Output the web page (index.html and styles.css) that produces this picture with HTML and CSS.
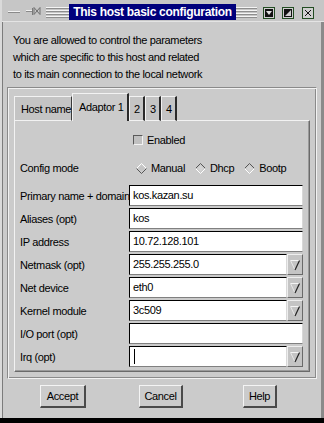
FILE: index.html
```html
<!DOCTYPE html>
<html>
<head>
<meta charset="utf-8">
<link rel="stylesheet" href="styles.css">
</head>
<body>
<div class="window">
  <div class="titlebar">
    <span class="dash"></span>
    <svg class="pin" width="15" height="10" viewBox="0 0 15 10">
      <path d="M0 5.5H6" stroke="#8a8a8a" stroke-width="1"/>
      <path d="M0 4.5H6" stroke="#f0f0f0" stroke-width="1"/>
      <path d="M6.5 2V9" stroke="#7a7a7a" stroke-width="1"/>
      <path d="M8 1.5L14 8.5M8 8.5L14 1.5M8 1.5V8.5M14 1.5V8.5" stroke="#707070" stroke-width="1" fill="none"/>
    </svg>
    <span class="stripes s1"></span>
    <span class="title">This host basic configuration</span>
    <span class="stripes s2"></span>
    <span class="tbtn b1">
      <svg width="12" height="12" viewBox="0 0 12 12"><rect x="0.5" y="0.5" width="11" height="11" fill="#cfcfcf" stroke="#234d23"/><rect x="2" y="2" width="8" height="8" fill="#111"/><path d="M3 4H9L6 8Z" fill="#e0e0e0"/></svg>
    </span>
    <span class="tbtn b2">
      <svg width="12" height="12" viewBox="0 0 12 12"><rect x="0.5" y="0.5" width="11" height="11" fill="#cfcfcf" stroke="#234d23"/><path d="M2.5 2.5H9.5L2.5 9.5Z" fill="#111"/><rect x="2.5" y="2.5" width="7" height="7" fill="none" stroke="#111"/></svg>
    </span>
    <span class="tbtn b3">
      <svg width="12" height="12" viewBox="0 0 12 12"><rect x="0.5" y="0.5" width="11" height="11" fill="#cfcfcf" stroke="#234d23"/><path d="M3 3L9 9M9 3L3 9" stroke="#111" stroke-width="1"/></svg>
    </span>
  </div>

  <div class="intro">
    <div>You are allowed to control the parameters</div>
    <div>which are specific to this host and related</div>
    <div>to its main connection to the local network</div>
  </div>

  <div class="frame">
    <div class="tabs">
      <div class="tab">Host name</div>
      <div class="tab sel">Adaptor 1</div>
      <div class="tab num">2</div>
      <div class="tab num">3</div>
      <div class="tab num">4</div>
    </div>
    <div class="panel">
      <div class="check-row">
        <span class="checkbox"></span>
        <span>Enabled</span>
      </div>
      <div class="radio-row">
        <span class="rlabel">Config mode</span>
        <span class="radio on"><svg width="11" height="11" viewBox="0 0 11 11"><path d="M0.5 5.5L5.5 0.5L10.5 5.5" fill="none" stroke="#ffffff"/><path d="M0.5 5.5L5.5 10.5L10.5 5.5" fill="none" stroke="#555"/><path d="M2.5 5.5L5.5 2.5L8.5 5.5L5.5 8.5Z" fill="#c4c4c4"/></svg>Manual</span>
        <span class="radio"><svg width="11" height="11" viewBox="0 0 11 11"><path d="M0.5 5.5L5.5 0.5L10.5 5.5" fill="none" stroke="#555"/><path d="M0.5 5.5L5.5 10.5L10.5 5.5" fill="none" stroke="#ffffff"/><path d="M2.5 5.5L5.5 2.5L8.5 5.5L5.5 8.5Z" fill="#d4d4d4"/></svg>Dhcp</span>
        <span class="radio"><svg width="11" height="11" viewBox="0 0 11 11"><path d="M0.5 5.5L5.5 0.5L10.5 5.5" fill="none" stroke="#555"/><path d="M0.5 5.5L5.5 10.5L10.5 5.5" fill="none" stroke="#ffffff"/><path d="M2.5 5.5L5.5 2.5L8.5 5.5L5.5 8.5Z" fill="#d4d4d4"/></svg>Bootp</span>
      </div>
      <div class="fields">
        <span class="label">Primary name + domain</span>
        <div class="entry">kos.kazan.su</div>
        <span class="label">Aliases (opt)</span>
        <div class="entry">kos</div>
        <span class="label">IP address</span>
        <div class="entry">10.72.128.101</div>
        <span class="label">Netmask (opt)</span>
        <div class="combo"><div class="entry">255.255.255.0</div><span class="cbtn"><svg width="14" height="17" viewBox="0 0 14 17"><path d="M2.5 4.5H11.5" stroke="#f4f4f4"/><path d="M2.5 4.5L7 14" stroke="#e8e8e8"/><path d="M11.5 4.5L7 14" stroke="#222" stroke-width="1.2"/></svg></span></div>
        <span class="label">Net device</span>
        <div class="combo"><div class="entry">eth0</div><span class="cbtn"><svg width="14" height="17" viewBox="0 0 14 17"><path d="M2.5 4.5H11.5" stroke="#f4f4f4"/><path d="M2.5 4.5L7 14" stroke="#e8e8e8"/><path d="M11.5 4.5L7 14" stroke="#222" stroke-width="1.2"/></svg></span></div>
        <span class="label">Kernel module</span>
        <div class="combo"><div class="entry">3c509</div><span class="cbtn"><svg width="14" height="17" viewBox="0 0 14 17"><path d="M2.5 4.5H11.5" stroke="#f4f4f4"/><path d="M2.5 4.5L7 14" stroke="#e8e8e8"/><path d="M11.5 4.5L7 14" stroke="#222" stroke-width="1.2"/></svg></span></div>
        <span class="label">I/O port (opt)</span>
        <div class="entry"></div>
        <span class="label">Irq (opt)</span>
        <div class="combo"><div class="entry"><span class="caret"></span></div><span class="cbtn"><svg width="14" height="17" viewBox="0 0 14 17"><path d="M2.5 4.5H11.5" stroke="#f4f4f4"/><path d="M2.5 4.5L7 14" stroke="#e8e8e8"/><path d="M11.5 4.5L7 14" stroke="#222" stroke-width="1.2"/></svg></span></div>
      </div>
    </div>
  </div>

  <div class="buttons">
    <span class="btn">Accept</span>
    <span class="btn">Cancel</span>
    <span class="btn">Help</span>
  </div>
</div>
</body>
</html>
```

FILE: styles.css
```css
html, body {
  margin: 0;
  padding: 0;
  background: #000;
}
body {
  width: 324px;
  height: 423px;
  overflow: hidden;
  font-family: "Liberation Sans", Arial, sans-serif;
  font-size: 11px;
  letter-spacing: -0.35px;
  color: #000;
}
.window {
  box-sizing: border-box;
  width: 324px;
  height: 418px;
  background: #cbcbcb;
  border-left: 2px solid #dadada;
  box-shadow: inset 1px 0 #7c7c7c, inset -3px 0 #8a8a8a;
  display: flex;
  flex-direction: column;
}
.titlebar {
  height: 22px;
  display: flex;
  align-items: flex-start;
  padding-left: 6px;
  background: #c6c6c6;
  border-bottom: 1px solid #e4e4e4;
  box-sizing: border-box;
}
.dash {
  flex: none;
  width: 12px;
  height: 1px;
  margin-top: 11px;
  background: #f2f2f2;
  border-bottom: 1px solid #8a8a8a;
}
.pin {
  flex: none;
  margin: 6px 0 0 6px;
}
.stripes {
  flex: none;
  height: 12px;
  margin-top: 7px;
  background: repeating-linear-gradient(to bottom, #f4f4f4 0, #f4f4f4 1px, #8e8e8e 1px, #8e8e8e 2px, #c6c6c6 2px, #c6c6c6 3px);
}
.s1 { width: 23px; margin-left: 5px; }
.s2 { width: 21px; }
.title {
  flex: none;
  width: 167px;
  height: 16px;
  margin-top: 4px;
  background: #00007c;
  color: #fff;
  font-weight: bold;
  font-size: 12px;
  letter-spacing: -0.3px;
  line-height: 16px;
  text-align: center;
  white-space: nowrap;
}
.tbtn {
  flex: none;
  display: flex;
  margin-top: 7px;
}
.b1 { margin-left: 6px; }
.b2 { margin-left: 7px; }
.b3 { margin-left: 8px; }

.intro {
  padding: 10px 0 0 11px;
  line-height: 17px;
  white-space: nowrap;
}
.frame {
  margin: 4px 0 0 5px;
  width: 310px;
  box-sizing: border-box;
  border: 1px solid #8a8a8a;
  border-right-color: #f2f2f2;
  border-bottom-color: #f2f2f2;
  box-shadow: inset 1px 1px #f2f2f2, inset -1px -1px #8a8a8a;
  padding: 5px 6px 6px 6px;
}
.tabs {
  display: flex;
  align-items: flex-end;
  height: 28px;
  margin-bottom: -1px;
  position: relative;
  z-index: 1;
}
.tab {
  box-sizing: border-box;
  height: 25px;
  line-height: 24px;
  background: #c4c4c4;
  border-top: 1px solid #f2f2f2;
  border-left: 1px solid #f2f2f2;
  border-right: 1px solid #3a3a3a;
  border-bottom: 1px solid #f2f2f2;
  padding: 0 0 0 6px;
  white-space: nowrap;
}
.tab:first-child {
  width: 58px;
}
.tab.sel {
  height: 28px;
  line-height: 27px;
  width: 57px;
  background: #cbcbcb;
  border-bottom: none;
  border-right: 2px solid #2a2a2a;
  padding: 0 0 0 6px;
}
.tab.num {
  width: 16px;
  padding: 0 0 0 4px;
  border-right: 2px solid #2a2a2a;
}
.panel {
  box-sizing: border-box;
  height: 252px;
  border: 1px solid #f2f2f2;
  border-right-color: #6a6a6a;
  border-bottom-color: #6a6a6a;
  box-shadow: inset -1px -1px #9a9a9a;
  padding: 9px 6px 0 5px;
}
.check-row {
  height: 20px;
  display: flex;
  align-items: center;
  padding-left: 113px;
}
.checkbox {
  box-sizing: border-box;
  width: 10px;
  height: 10px;
  border: 1px solid #f2f2f2;
  border-top-color: #5a5a5a;
  border-left-color: #5a5a5a;
  background: #c0c0c0;
  margin-right: 4px;
}
.radio-row {
  margin-top: 8px;
  height: 20px;
  display: flex;
  align-items: center;
}
.rlabel {
  width: 116px;
}
.radio {
  display: flex;
  align-items: center;
  margin-right: 10px;
}
.radio svg {
  margin-right: 4px;
}
.fields {
  margin-top: 7px;
  display: grid;
  grid-template-columns: 109px 1fr;
  grid-auto-rows: 21px;
  row-gap: 2px;
  align-items: center;
}
.label {
  white-space: nowrap;
}
.entry {
  box-sizing: border-box;
  height: 21px;
  background: #fff;
  border: 1px solid #000;
  border-right-color: #d8d8d8;
  border-bottom-color: #808080;
  padding-left: 3px;
  line-height: 19px;
}
.combo {
  display: flex;
  height: 21px;
}
.combo .entry {
  flex: 1;
}
.caret {
  display: inline-block;
  width: 1px;
  height: 15px;
  background: #000;
  vertical-align: middle;
  margin-left: 1px;
  margin-top: -2px;
}
.cbtn {
  box-sizing: border-box;
  width: 16px;
  height: 21px;
  background: #c4c4c4;
  border: 1px solid #eeeeee;
  border-right-color: #6a6a6a;
  border-bottom-color: #6a6a6a;
  display: flex;
  align-items: center;
  justify-content: center;
}
.buttons {
  margin-top: 6px;
  display: flex;
  padding-left: 38px;
}
.btn {
  box-sizing: border-box;
  height: 23px;
  line-height: 21px;
  text-align: center;
  background: #cbcbcb;
  border: 1px solid #f4f4f4;
  border-right: 2px solid #4a4a4a;
  border-bottom: 2px solid #4a4a4a;
}
.btn:nth-child(1) { width: 46px; }
.btn:nth-child(2) { width: 44px; margin-left: 53px; }
.btn:nth-child(3) { width: 34px; margin-left: 60px; }
```
